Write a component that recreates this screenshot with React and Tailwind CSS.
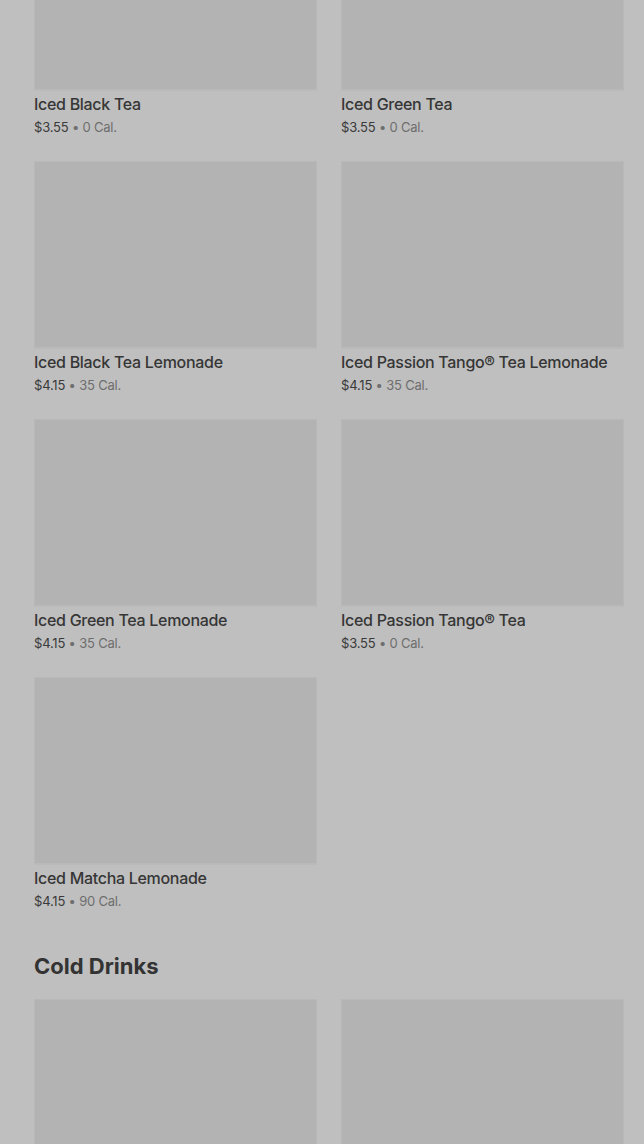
import React from "react";

const items = [
  { name: "Iced Black Tea", price: "$3.55", cal: "0 Cal." },
  { name: "Iced Green Tea", price: "$3.55", cal: "0 Cal." },
  { name: "Iced Black Tea Lemonade", price: "$4.15", cal: "35 Cal." },
  { name: "Iced Passion Tango® Tea Lemonade", price: "$4.15", cal: "35 Cal." },
  { name: "Iced Green Tea Lemonade", price: "$4.15", cal: "35 Cal." },
  { name: "Iced Passion Tango® Tea", price: "$3.55", cal: "0 Cal." },
  { name: "Iced Matcha Lemonade", price: "$4.15", cal: "90 Cal." },
];

function Card({ item }) {
  return (
    <div className="flex flex-col">
      <div className="h-[188px] bg-[#b3b3b3] border border-[#b8b8b8] border-b-2 border-b-[#bababa]" />
      <div className="mt-[1px] h-[24px] leading-[24px] text-[16px] font-medium text-[#363636] whitespace-nowrap tracking-[-0.3px]">
        {item.name}
      </div>
      <div className="mt-[1px] h-[20px] leading-[20px] text-[13px] whitespace-nowrap tracking-[-0.2px]">
        <span className="text-[#3a3a3a]">{item.price}</span>
        <span className="text-[#6e6e6e]"> • {item.cal}</span>
      </div>
    </div>
  );
}

export default function App() {
  return (
    <div
      className="w-[644px] h-[1144px] overflow-hidden bg-[#bfbfbf]"
      style={{ fontFamily: "Inter, 'Noto Sans', sans-serif" }}
    >
      <div className="-mt-[97px] pl-[34px] pr-[20px]">
        <div className="grid grid-cols-2 gap-x-[24px] gap-y-[24px]">
          {items.map((it, i) => (
            <Card key={i} item={it} />
          ))}
        </div>
        <h2 className="mt-[39px] mb-[17px] h-[32px] leading-[32px] text-[22px] font-bold text-[#333333] tracking-[0px]">
          Cold Drinks
        </h2>
        <div className="grid grid-cols-2 gap-x-[24px]">
          <div className="h-[188px] bg-[#b3b3b3] border border-[#b8b8b8]" />
          <div className="h-[188px] bg-[#b3b3b3] border border-[#b8b8b8]" />
        </div>
      </div>
    </div>
  );
}
